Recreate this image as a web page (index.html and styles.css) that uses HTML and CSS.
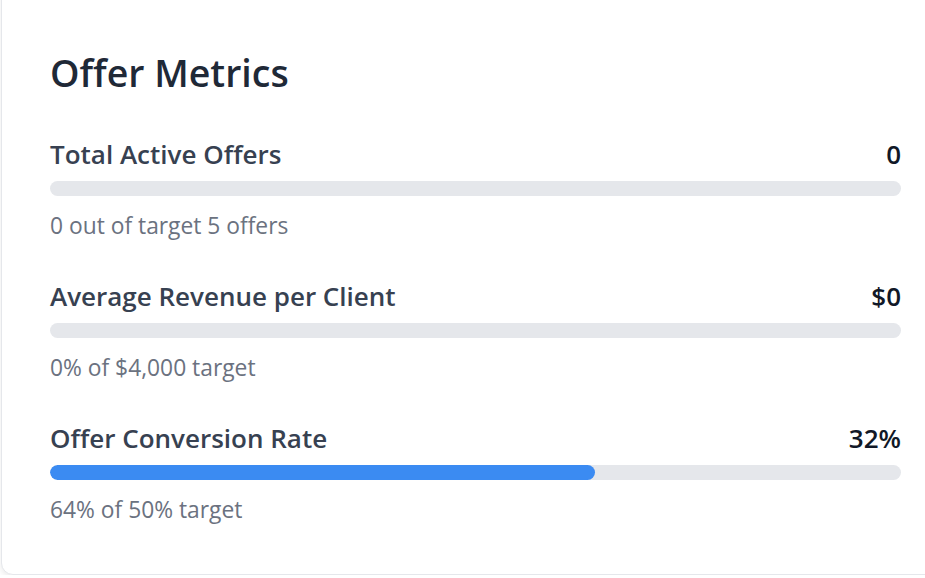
FILE: index.html
```html
<!DOCTYPE html>
<html lang="en">
<head>
<meta charset="utf-8">
<title>Offer Metrics</title>
<link rel="stylesheet" href="styles.css">
</head>
<body>
<div class="card">
  <h2 class="title">Offer Metrics</h2>
  <div class="metrics">
    <div class="metric">
      <div class="row"><span class="label">Total Active Offers</span><span class="value">0</span></div>
      <div class="bar"><div class="fill" style="width:0%"></div></div>
      <p class="sub">0 out of target 5 offers</p>
    </div>
    <div class="metric">
      <div class="row"><span class="label">Average Revenue per Client</span><span class="value">$0</span></div>
      <div class="bar"><div class="fill" style="width:0%"></div></div>
      <p class="sub">0% of $4,000 target</p>
    </div>
    <div class="metric">
      <div class="row"><span class="label">Offer Conversion Rate</span><span class="value">32%</span></div>
      <div class="bar"><div class="fill" style="width:64%"></div></div>
      <p class="sub">64% of 50% target</p>
    </div>
  </div>
</div>
</body>
</html>
```
FILE: styles.css
```css
html, body {
  margin: 0;
  padding: 0;
  background: #ffffff;
  overflow: hidden;
  font-family: "Open Sans", "Noto Sans", sans-serif;
}
.card {
  box-sizing: border-box;
  width: 997px;
  margin: -20px 0 0 1px;
  padding: 70px 48px 50px 48px;
  background: #ffffff;
  border: 1px solid #e5e7eb;
  border-radius: 12px;
  box-shadow: 0 3px 6px rgba(0, 0, 0, 0.08);
}
.title {
  margin: 0;
  font-size: 37.5px;
  line-height: 43px;
  font-weight: 600;
  color: #1f2937;
}
.metrics {
  display: flex;
  flex-direction: column;
  gap: 41px;
  margin-top: 45px;
  width: 851px;
}
.metric {
  display: flex;
  flex-direction: column;
}
.row {
  display: flex;
  justify-content: space-between;
  align-items: center;
  height: 30px;
}
.label {
  font-size: 26px;
  font-weight: 600;
  color: #374151;
}
.value {
  font-size: 26px;
  font-weight: 600;
  color: #111827;
}
.bar {
  margin-top: 12px;
  height: 15px;
  border-radius: 8px;
  background: #e5e7eb;
  overflow: hidden;
}
.fill {
  height: 100%;
  border-radius: 8px;
  background: #3b8bf2;
}
.sub {
  margin: 16px 0 0 0;
  font-size: 22.8px;
  line-height: 28px;
  color: #6b7280;
}
```
